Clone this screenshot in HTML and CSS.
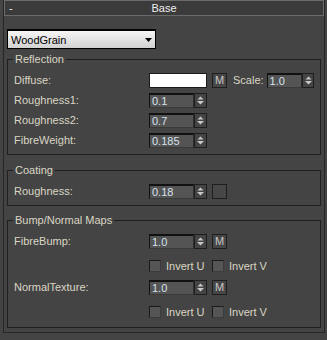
FILE: index.html
```html
<!DOCTYPE html>
<html lang="en">
<head>
  <meta charset="UTF-8">
  <meta name="viewport" content="width=device-width, initial-scale=1.0">
  <title>Base</title>
  <link rel="stylesheet" href="styles.css">
</head>
<body>
  <div class="rollout">
    <div class="rollout-head">
      <span class="collapse">-</span>
      <span class="rollout-title">Base</span>
      <span></span>
    </div>

    <div class="dropdown">
      <span>WoodGrain</span>
      <svg width="7" height="4" viewBox="0 0 7 4"><polygon points="0,0 7,0 3.5,4" fill="#000"/></svg>
    </div>

    <fieldset class="group group-reflection">
      <legend>Reflection</legend>
      <div class="row">
        <span class="label">Diffuse:</span>
        <span class="swatch"></span>
        <span class="map-btn">M</span>
        <span class="scale-label">Scale:</span>
        <span class="spinner narrow">
          <span class="spin-field">1.0</span>
          <span class="spin-arrows"><svg width="11" height="13" viewBox="0 0 11 13"><polygon points="2.5,5.5 8.5,5.5 5.5,2.5" fill="#c8c8c8"/><rect x="2.5" y="7" width="6" height="1" fill="#c8c8c8"/><polygon points="3,8 8,8 5.5,10.5" fill="#c8c8c8"/></svg></span>
        </span>
      </div>
      <div class="row">
        <span class="label">Roughness1:</span>
        <span class="spinner">
          <span class="spin-field">0.1</span>
          <span class="spin-arrows"><svg width="11" height="13" viewBox="0 0 11 13"><polygon points="2.5,5.5 8.5,5.5 5.5,2.5" fill="#c8c8c8"/><rect x="2.5" y="7" width="6" height="1" fill="#c8c8c8"/><polygon points="3,8 8,8 5.5,10.5" fill="#c8c8c8"/></svg></span>
        </span>
      </div>
      <div class="row">
        <span class="label">Roughness2:</span>
        <span class="spinner">
          <span class="spin-field">0.7</span>
          <span class="spin-arrows"><svg width="11" height="13" viewBox="0 0 11 13"><polygon points="2.5,5.5 8.5,5.5 5.5,2.5" fill="#c8c8c8"/><rect x="2.5" y="7" width="6" height="1" fill="#c8c8c8"/><polygon points="3,8 8,8 5.5,10.5" fill="#c8c8c8"/></svg></span>
        </span>
      </div>
      <div class="row">
        <span class="label">FibreWeight:</span>
        <span class="spinner">
          <span class="spin-field">0.185</span>
          <span class="spin-arrows"><svg width="11" height="13" viewBox="0 0 11 13"><polygon points="2.5,5.5 8.5,5.5 5.5,2.5" fill="#c8c8c8"/><rect x="2.5" y="7" width="6" height="1" fill="#c8c8c8"/><polygon points="3,8 8,8 5.5,10.5" fill="#c8c8c8"/></svg></span>
        </span>
      </div>
    </fieldset>

    <fieldset class="group group-coating">
      <legend>Coating</legend>
      <div class="row">
        <span class="label">Roughness:</span>
        <span class="spinner">
          <span class="spin-field">0.18</span>
          <span class="spin-arrows"><svg width="11" height="13" viewBox="0 0 11 13"><polygon points="2.5,5.5 8.5,5.5 5.5,2.5" fill="#c8c8c8"/><rect x="2.5" y="7" width="6" height="1" fill="#c8c8c8"/><polygon points="3,8 8,8 5.5,10.5" fill="#c8c8c8"/></svg></span>
        </span>
        <span class="map-btn"></span>
      </div>
    </fieldset>

    <fieldset class="group group-bump">
      <legend>Bump/Normal Maps</legend>
      <div class="row">
        <span class="label">FibreBump:</span>
        <span class="spinner">
          <span class="spin-field">1.0</span>
          <span class="spin-arrows"><svg width="11" height="13" viewBox="0 0 11 13"><polygon points="2.5,5.5 8.5,5.5 5.5,2.5" fill="#c8c8c8"/><rect x="2.5" y="7" width="6" height="1" fill="#c8c8c8"/><polygon points="3,8 8,8 5.5,10.5" fill="#c8c8c8"/></svg></span>
        </span>
        <span class="map-btn">M</span>
      </div>
      <div class="check-row">
        <span class="check-item"><span class="check"></span><span class="check-label">Invert U</span></span>
        <span class="check-item"><span class="check"></span><span class="check-label">Invert V</span></span>
      </div>
      <div class="row row-gap">
        <span class="label">NormalTexture:</span>
        <span class="spinner">
          <span class="spin-field">1.0</span>
          <span class="spin-arrows"><svg width="11" height="13" viewBox="0 0 11 13"><polygon points="2.5,5.5 8.5,5.5 5.5,2.5" fill="#c8c8c8"/><rect x="2.5" y="7" width="6" height="1" fill="#c8c8c8"/><polygon points="3,8 8,8 5.5,10.5" fill="#c8c8c8"/></svg></span>
        </span>
        <span class="map-btn">M</span>
      </div>
      <div class="check-row">
        <span class="check-item"><span class="check"></span><span class="check-label">Invert U</span></span>
        <span class="check-item"><span class="check"></span><span class="check-label">Invert V</span></span>
      </div>
    </fieldset>
  </div>
</body>
</html>
```

FILE: styles.css
```css
* {
  box-sizing: border-box;
}

body {
  margin: 0;
  background: #444444;
  font-family: 'Liberation Sans', Arial, sans-serif;
  font-size: 11px;
  color: #dad6c4;
}

.rollout {
  margin-left: 3px;
  width: 322px;
  border: 1px solid #262626;
  border-top: none;
  padding-bottom: 4px;
}

.rollout-head {
  display: grid;
  grid-template-columns: 1fr auto 1fr;
  height: 16px;
  line-height: 14px;
  border: 1px solid #6a6a6a;
  background: #3b3b3b;
  color: #eeeeee;
}

.collapse {
  padding-left: 4px;
}

.dropdown {
  display: flex;
  align-items: center;
  justify-content: space-between;
  width: 149px;
  height: 20px;
  margin: 13px 0 0 3px;
  padding: 0 3px;
  border: 1px solid #000;
  border-top-width: 2px;
  background: linear-gradient(#f6f6f6, #d2d2d2);
  color: #000;
}

.group {
  margin: 4px 3px 0;
  padding: 4px 6px 4px 6px;
  border: 1px solid #1f1f1f;
  min-width: 0;
}

.group-coating {
  margin-top: 9px;
}

.group-bump {
  margin-top: 8px;
  padding-bottom: 5px;
}

.group legend {
  margin-left: -1px;
  padding: 0 2px;
  line-height: 13px;
}

.row {
  display: flex;
  align-items: center;
  height: 20px;
}

.row-gap {
  margin-top: 1px;
}

.label {
  width: 135px;
}

.swatch {
  width: 58px;
  height: 15px;
  background: #ffffff;
  border: 1px solid #1a1a1a;
}

.map-btn {
  display: flex;
  align-items: center;
  justify-content: center;
  width: 15px;
  height: 15px;
  margin-left: 5px;
  border: 1px solid #1e1e1e;
  background: #474747;
  color: #c8c8c8;
}

.scale-label {
  margin: 0 3px 0 6px;
}

.spinner {
  display: flex;
  height: 15px;
}

.spin-field {
  width: 45px;
  padding-left: 2px;
  line-height: 12px;
  border-top: 2px solid #111;
  border-left: 1px solid #111;
  border-right: 1px solid #2e2e2e;
  border-bottom: 1px solid #3a3a3a;
  background: #545454;
  color: #d6e2ee;
}

.spin-arrows {
  width: 13px;
  border: 1px solid #1e1e1e;
  background: #444444;
}

.spin-arrows svg {
  display: block;
}

.spinner.narrow .spin-field {
  width: 35px;
}

.spinner.narrow .spin-arrows {
  width: 12px;
}

.check-row {
  display: flex;
  align-items: center;
  height: 20px;
  margin-top: 5px;
  padding-left: 135px;
}

.check-item {
  display: flex;
  align-items: center;
  width: 63px;
}

.check {
  width: 12px;
  height: 12px;
  border: 1px solid;
  border-color: #1a1a1a #3c3c3c #3c3c3c #1a1a1a;
  background: #555555;
}

.check-label {
  margin-left: 5px;
}
```
